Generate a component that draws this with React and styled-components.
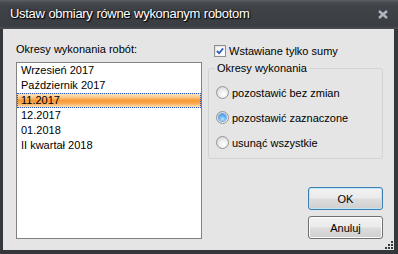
import React, { useState } from "react";
import styled, { createGlobalStyle } from "styled-components";

const Global = createGlobalStyle`
  html, body { margin: 0; padding: 0; background: #2f3236; }
  body { font-family: "Liberation Sans", Arial, sans-serif; }
  * { box-sizing: border-box; }
`;

const Window = styled.div`
  width: 398px;
  height: 254px;
  display: flex;
  flex-direction: column;
  background: #34373b;
  position: relative;
  overflow: hidden;
`;

const TitleBar = styled.div`
  height: 29px;
  flex: none;
  display: flex;
  align-items: center;
  justify-content: space-between;
  padding: 0 10px 2px 10px;
  background: linear-gradient(#5e6166 0px, #4a4d52 2px, #404348 6px, #3a3d42 26px, #4a4d51 29px);
`;

const Title = styled.div`
  color: #ffffff;
  font-size: 13px;
  letter-spacing: -0.3px;
  word-spacing: 0.5px;
  text-shadow: 1px 1px 1px #000, 0 0 3px #111;
  white-space: nowrap;
`;

const CloseGlyph = styled.svg`
  width: 10px;
  height: 9px;
  margin-top: 1px;
`;

const Client = styled.div`
  flex: 1;
  margin: 0 4px 4px 3px;
  background: #e5e5e5;
  display: flex;
  gap: 6px;
  padding: 14px 11px 11px 13px;
  position: relative;
`;

const LeftColumn = styled.div`
  width: 186px;
  display: flex;
  flex-direction: column;
  gap: 6px;
`;

const Label = styled.div`
  font-size: 11px;
  line-height: 13px;
  color: #000;
  white-space: nowrap;
`;

const ListBox = styled.div`
  flex: 1;
  background: #ffffff;
  border: 1px solid #828282;
  display: flex;
  flex-direction: column;
`;

const ListItem = styled.div`
  height: 15px;
  font-size: 11px;
  line-height: 13px;
  color: #000;
  padding-left: 3px;
  white-space: nowrap;
  border: 1px dotted ${(p) => (p.$selected ? "#2b56c6" : "transparent")};
  background: ${(p) =>
    p.$selected
      ? "linear-gradient(#fde3bf 0%, #fcc98a 25%, #f99a34 50%, #fba852 72%, #fde0b6 100%)"
      : "transparent"};
`;

const RightColumn = styled.div`
  flex: 1;
  display: flex;
  flex-direction: column;
`;

const CheckRow = styled.label`
  display: flex;
  align-items: center;
  gap: 3px;
  padding-left: 6px;
  height: 13px;
  margin-top: 1px;
  font-size: 11px;
  color: #000;
`;

const CheckBox = styled.span`
  width: 12px;
  height: 12px;
  border: 1px solid #8e8f8f;
  background: linear-gradient(135deg, #dcdcdc, #ffffff);
  display: flex;
  align-items: center;
  justify-content: center;
  padding: 1px;
`;

const CheckInner = styled.span`
  width: 100%;
  height: 100%;
  background: linear-gradient(135deg, #f4f4f4, #ffffff);
  display: flex;
  align-items: center;
  justify-content: center;
`;

const Group = styled.fieldset`
  margin: 5px 0 0 0;
  padding: 11px 0 6px 0;
  border: 1px solid #d3d3d3;
  border-radius: 3px;
  height: 97px;
  display: flex;
  flex-direction: column;
  gap: 12px;
`;

const Legend = styled.legend`
  font-size: 11px;
  line-height: 13px;
  color: #000;
  margin-left: 6px;
  padding: 0 2px;
`;

const RadioRow = styled.label`
  display: flex;
  align-items: center;
  gap: 3px;
  padding-left: 7px;
  height: 13px;
  font-size: 11px;
  color: #000;
  white-space: nowrap;
`;

const RadioCircle = styled.span`
  width: 13px;
  height: 13px;
  border-radius: 50%;
  border: 1px solid #959595;
  background: radial-gradient(circle at 60% 65%, #ffffff 0%, #f0f0f0 40%, #c8c8c8 100%);
  display: flex;
  align-items: center;
  justify-content: center;
  flex: none;
`;

const RadioDot = styled.span`
  width: 7px;
  height: 7px;
  border-radius: 50%;
  background: radial-gradient(circle at 50% 70%, #bfe3ff 0%, #6cb6f4 45%, #2a7fd6 100%);
  box-shadow: 0 0 0 1px #6aa8e0;
`;

const Spacer = styled.div`
  flex: 1;
`;

const ButtonStack = styled.div`
  display: flex;
  flex-direction: column;
  align-items: flex-end;
  gap: 6px;
`;

const Button = styled.button`
  width: 75px;
  height: 23px;
  font-family: "Liberation Sans", Arial, sans-serif;
  font-size: 11px;
  color: #000;
  border-radius: 3px;
  border: 1px solid ${(p) => (p.$default ? "#3c7fb1" : "#707070")};
  background: linear-gradient(#f2f2f2 0%, #ebebeb 48%, #dddddd 52%, #cfcfcf 100%);
  box-shadow: inset 0 0 0 1px ${(p) => (p.$default ? "#bde4f8" : "#fbfbfb")};
  padding: 0;
`;

const Grip = styled.svg`
  position: absolute;
  right: 0px;
  bottom: 0px;
  width: 11px;
  height: 11px;
`;

const items = [
  "Wrzesień 2017",
  "Październik 2017",
  "11.2017",
  "12.2017",
  "01.2018",
  "II kwartał 2018",
];

export default function App() {
  const [sel, setSel] = useState(2);
  const [radio, setRadio] = useState(1);
  const radios = ["pozostawić bez zmian", "pozostawić zaznaczone", "usunąć wszystkie"];
  return (
    <>
      <Global />
      <Window>
        <TitleBar>
          <Title>Ustaw obmiary równe wykonanym robotom</Title>
          <CloseGlyph viewBox="0 0 10 9">
            <path d="M1 1 L9 8 M9 1 L1 8" stroke="#aeb7c1" strokeWidth="2.4" strokeLinecap="butt" />
          </CloseGlyph>
        </TitleBar>
        <Client>
          <LeftColumn>
            <Label>Okresy wykonania robót:</Label>
            <ListBox>
              {items.map((t, i) => (
                <ListItem key={t} $selected={i === sel} onClick={() => setSel(i)}>
                  {t}
                </ListItem>
              ))}
            </ListBox>
          </LeftColumn>
          <RightColumn>
            <CheckRow>
              <CheckBox>
                <CheckInner>
                  <svg width="9" height="8" viewBox="0 0 9 8">
                    <path d="M1 4 L3.5 6.5 L8 1" fill="none" stroke="#2d5cc2" strokeWidth="2" />
                  </svg>
                </CheckInner>
              </CheckBox>
              Wstawiane tylko sumy
            </CheckRow>
            <Group>
              <Legend>Okresy wykonania</Legend>
              {radios.map((r, i) => (
                <RadioRow key={r} onClick={() => setRadio(i)}>
                  <RadioCircle>{radio === i && <RadioDot />}</RadioCircle>
                  {r}
                </RadioRow>
              ))}
            </Group>
            <Spacer />
            <ButtonStack>
              <Button $default>OK</Button>
              <Button>Anuluj</Button>
            </ButtonStack>
          </RightColumn>
          <Grip viewBox="0 0 11 11">
            <g fill="#3a3a3a">
              <rect x="8" y="2" width="2" height="2" />
              <rect x="5" y="5" width="2" height="2" />
              <rect x="8" y="5" width="2" height="2" />
              <rect x="2" y="8" width="2" height="2" />
              <rect x="5" y="8" width="2" height="2" />
              <rect x="8" y="8" width="2" height="2" />
            </g>
          </Grip>
        </Client>
      </Window>
    </>
  );
}
